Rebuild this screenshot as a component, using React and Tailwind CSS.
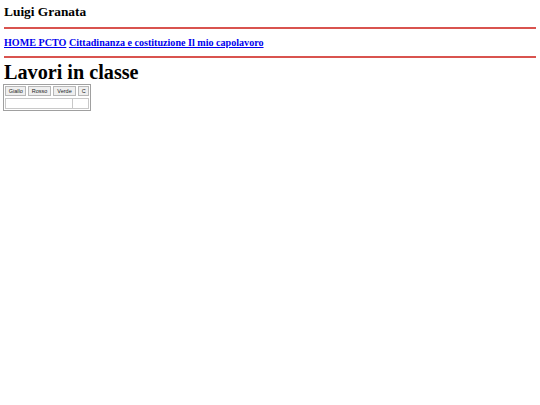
export default function App() {
  return (
    <div className="min-h-[405px] bg-white px-1 text-black" style={{ fontFamily: '"Liberation Serif", serif' }}>
      <h3 className="pt-[4px] text-[13.4px] font-bold leading-[15px]">Luigi Granata</h3>
      <hr className="mt-[8px] border-0 border-t-2 border-[#d9534f]" />
      <div className="mt-[8px] text-[10.1px] font-bold leading-[12px]">
        <a href="#" className="text-[#0000ee] underline">HOME PCTO</a>{' '}
        <a href="#" className="text-[#0000ee] underline">Cittadinanza e costituzione Il mio capolavoro</a>
      </div>
      <hr className="mt-[7px] border-0 border-t-2 border-[#d9534f]" />
      <h1 className="mt-[3px] text-[20.2px] font-bold leading-[23px]">Lavori in classe</h1>
      <div
        className="-ml-px flex w-[88px] flex-col gap-[2px] border border-[#a0a0a0] p-px"
        style={{ fontFamily: '"Liberation Sans", sans-serif' }}
      >
        <div className="flex gap-[2px]">
          {[['Giallo', 'w-[22px]'], ['Rosso', 'w-[23px]'], ['Verde', 'w-[24px]'], ['C', 'w-[11px]']].map(([t, w]) => (
            <button
              key={t}
              className={`${w} h-[10px] border border-[#b8b8b8] bg-[#efefef] p-0 text-[5.5px] leading-[8px] text-[#222]`}
            >
              {t}
            </button>
          ))}
        </div>
        <div className="flex border border-[#c8c8c8]">
          <input className="h-[9px] w-[67px] border-r border-[#c8c8c8] bg-white" />
          <div className="h-[9px] flex-1 bg-white" />
        </div>
      </div>
    </div>
  );
}
